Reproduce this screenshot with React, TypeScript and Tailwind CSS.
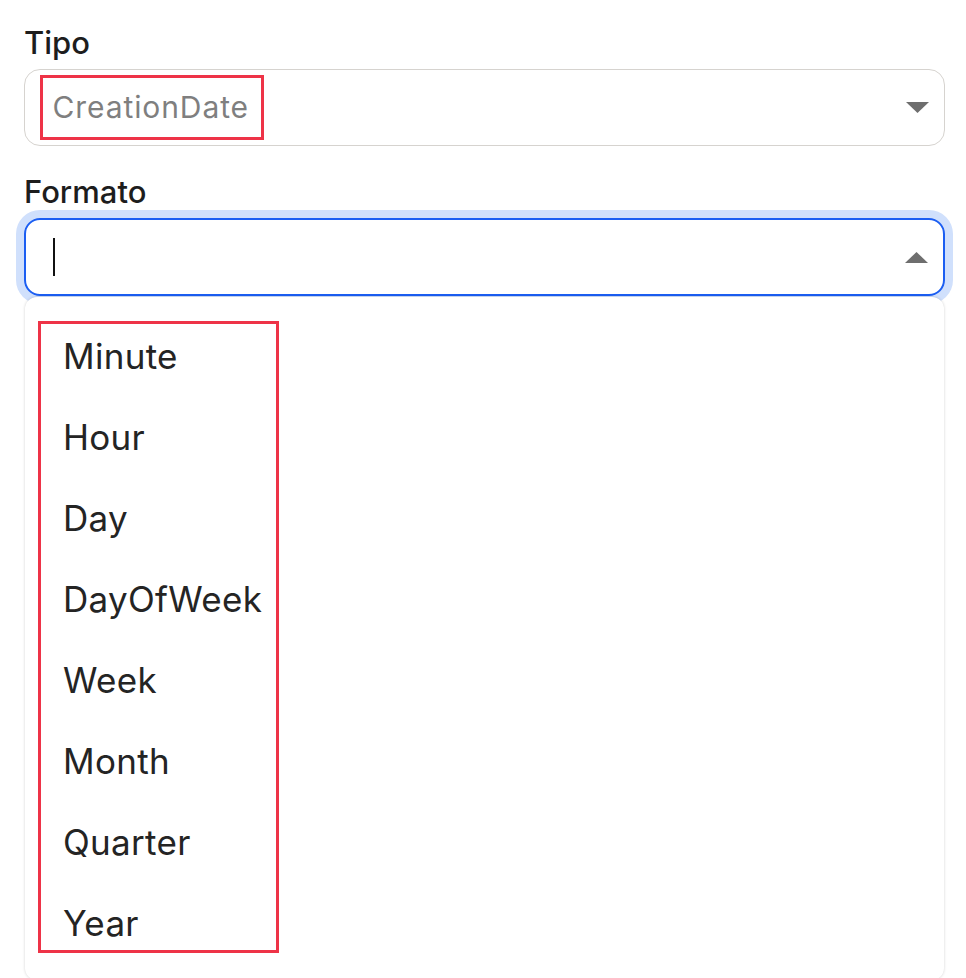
import React from "react";

const options = ["Minute", "Hour", "Day", "DayOfWeek", "Week", "Month", "Quarter", "Year"];

function Caret({ up = false }: { up?: boolean }) {
  return (
    <svg width="23" height="11" viewBox="0 0 23 11" className="shrink-0">
      {up ? (
        <path d="M0 11 L11.5 0 L23 11 Z" fill="#6e6e6e" />
      ) : (
        <path d="M0 0 L23 0 L11.5 11 Z" fill="#6e6e6e" />
      )}
    </svg>
  );
}

export default function App() {
  return (
    <div className="min-h-screen bg-white pl-[24px] pr-[21px] pt-[24px] font-['Inter','Noto_Sans',sans-serif] text-[#1d1d1d]">
      {/* Tipo */}
      <label className="block text-[31px] leading-[38px] font-medium mb-[6.5px]">Tipo</label>
      <div className="h-[77px] rounded-[16px] border-[1.5px] border-[#d6d3cf] flex items-center pl-[14.5px] pr-[15.5px]">
        <span className="inline-flex items-center h-[65px] border-[3px] border-[#ee3347] pl-[10px] pr-[12px] text-[30px] tracking-[0.9px] text-[#7f7f7f]">
          CreationDate
        </span>
        <div className="ml-auto">
          <Caret />
        </div>
      </div>

      {/* Formato */}
      <label className="block text-[31px] leading-[38px] font-medium mt-[27.5px] mb-[7px]">Formato</label>
      <div className="relative">
        <div className="h-[78px] rounded-[16px] border-2 border-[#1b5ef2] ring-[8px] ring-[#d0e0fc] flex items-center pl-[27px] pr-[15px]">
          <div className="w-[2px] h-[38px] bg-[#111]" />
          <div className="ml-auto">
            <Caret up />
          </div>
        </div>

        {/* Dropdown menu */}
        <div className="absolute left-[1px] right-[1px] top-full mt-[1px] z-10 bg-white rounded-[12px] shadow-[0_0_3px_rgba(0,0,0,0.18)] pt-[18.5px] pb-[16px]">
          {options.map(opt => (
            <div key={opt} className="h-[81px] flex items-center pl-[38px] text-[35px] tracking-[0.3px] text-[#242424]">
              {opt}
            </div>
          ))}
          <div className="absolute left-[13px] top-[24px] w-[241px] h-[632px] border-[3px] border-[#ee3347] pointer-events-none" />
        </div>
      </div>
    </div>
  );
}
